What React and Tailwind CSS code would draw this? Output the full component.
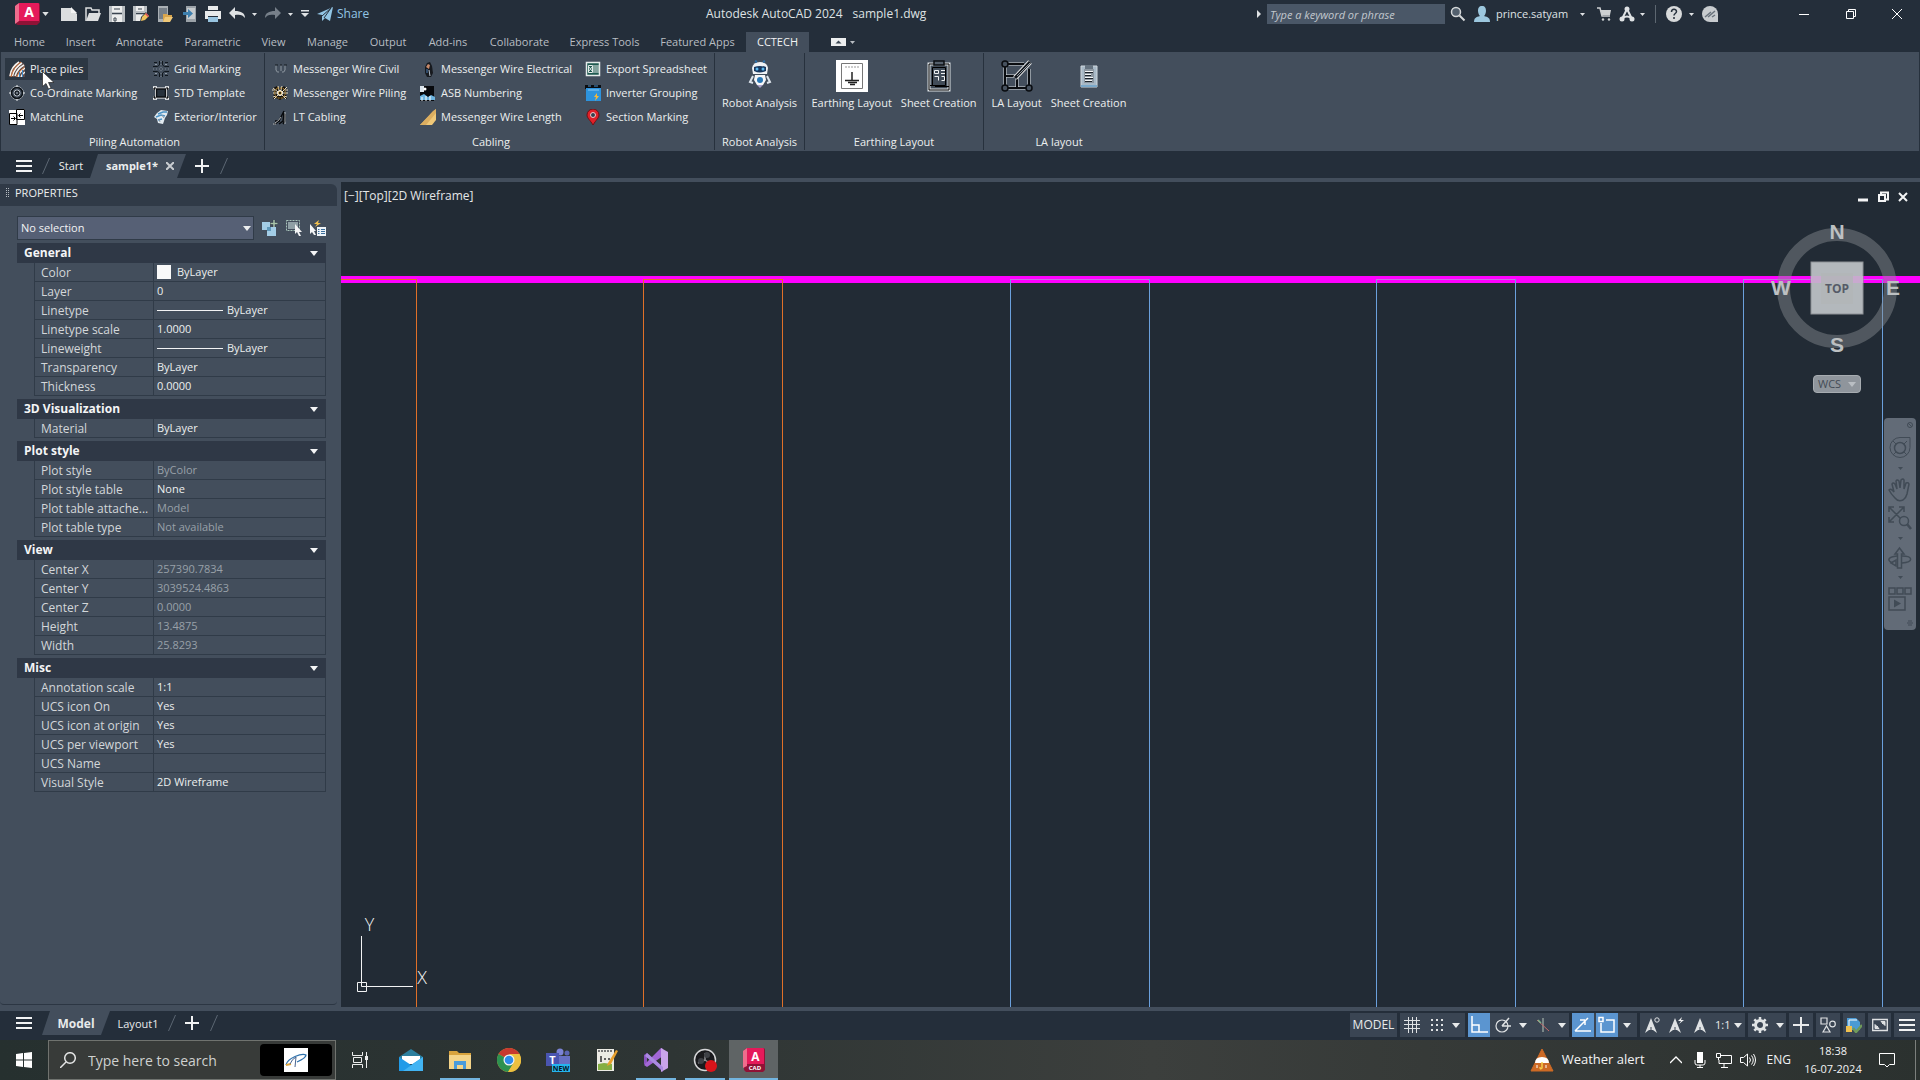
import clsx from 'clsx'

const RIBBON_TABS = [
  ['Home', 'w-[53px]'],
  ['Insert', 'w-[49px]'],
  ['Annotate', 'w-[69px]'],
  ['Parametric', 'w-[77px]'],
  ['View', 'w-[45px]'],
  ['Manage', 'w-[63px]'],
  ['Output', 'w-[58px]'],
  ['Add-ins', 'w-[62px]'],
  ['Collaborate', 'w-[81px]'],
  ['Express Tools', 'w-[89px]'],
  ['Featured Apps', 'w-[97px]'],
  ['CCTECH', 'w-[63px]'],
]

const SECTIONS = [
  {
    title: 'General',
    rows: [
      ['Color', 'ByLayer', 'swatch'],
      ['Layer', '0'],
      ['Linetype', 'ByLayer', 'line'],
      ['Linetype scale', '1.0000'],
      ['Lineweight', 'ByLayer', 'line'],
      ['Transparency', 'ByLayer'],
      ['Thickness', '0.0000'],
    ],
  },
  { title: '3D Visualization', rows: [['Material', 'ByLayer']] },
  {
    title: 'Plot style',
    rows: [
      ['Plot style', 'ByColor', 'dim'],
      ['Plot style table', 'None'],
      ['Plot table attache...', 'Model', 'dim'],
      ['Plot table type', 'Not available', 'dim'],
    ],
  },
  {
    title: 'View',
    rows: [
      ['Center X', '257390.7834', 'dim'],
      ['Center Y', '3039524.4863', 'dim'],
      ['Center Z', '0.0000', 'dim'],
      ['Height', '13.4875', 'dim'],
      ['Width', '25.8293', 'dim'],
    ],
  },
  {
    title: 'Misc',
    rows: [
      ['Annotation scale', '1:1'],
      ['UCS icon On', 'Yes'],
      ['UCS icon at origin', 'Yes'],
      ['UCS per viewport', 'Yes'],
      ['UCS Name', ''],
      ['Visual Style', '2D Wireframe'],
    ],
  },
]

function Svg({ size = 16, box, className, children }) {
  return (
    <svg
      width={size}
      height={size}
      viewBox={box || `0 0 ${size} ${size}`}
      fill="none"
      aria-hidden="true"
      className={clsx('shrink-0', className)}
    >
      {children}
    </svg>
  )
}

function Caret({ className }) {
  return (
    <svg width="8" height="5" viewBox="0 0 8 5" aria-hidden="true" className={clsx('shrink-0', className)}>
      <path d="M0 0h8L4 5z" fill="currentColor" />
    </svg>
  )
}

function SmallCaret({ className }) {
  return (
    <svg width="5" height="3" viewBox="0 0 5 3" aria-hidden="true" className={clsx('shrink-0', className)}>
      <path d="M0 0h5L2.5 3z" fill="currentColor" />
    </svg>
  )
}

/* ---------- title bar ---------- */

function TitleBar() {
  return (
    <header className="flex h-8 items-center pb-2 text-[#dfe2e4]">
      <div className="flex w-[706px] items-center pt-1">
        <button type="button" aria-label="Application menu" className="ml-[15px] flex items-center gap-[2px]">
          <svg width="25" height="22" viewBox="0 0 25 22" aria-hidden="true">
            <path d="M1 2l4-2h18a2 2 0 0 1 2 2v17l-3 3H3a2 2 0 0 1-2-2z" fill="#8f1236" />
            <path d="M4 0h19a1 1 0 0 1 1 1v17H4z" fill="#e51a5a" />
            <path d="M0 3l4-3v18l-4 3z" fill="#ee6d8d" />
            <text x="14" y="14" textAnchor="middle" fontSize="14" fontWeight="700" fill="#fff">A</text>
          </svg>
          <Caret className="h-1 w-[7px]" />
        </button>
        <button type="button" aria-label="New" className="ml-3">
          <Svg><path d="M0 2h10l6 6v7H0z" fill="#dcdedf" /><path d="M10 1l6 6h-6z" fill="#f4f4f4" /></Svg>
        </button>
        <button type="button" aria-label="Open" className="ml-2">
          <Svg><path d="M1 15V2h5l1 2h7v3" stroke="#dcdedf" strokeWidth="1.5" /><path d="M4 7h12l-3 8H1z" fill="#dcdedf" /></Svg>
        </button>
        <button type="button" aria-label="Save" className="ml-2">
          <Svg>
            <path d="M0 0h16v16H0z" fill="#b9bec2" />
            <path d="M3 0h10v6H3zM3 9h10v7H3z" fill="#eceded" />
            <path d="M5 3h6M3 7.500h10M5 12h2v3H5z" stroke="#3a444f" />
          </Svg>
        </button>
        <button type="button" aria-label="Save As" className="ml-2">
          <Svg>
            <path d="M0 0h14v8l-6 7H0z" fill="#b9bec2" />
            <path d="M3 0h8v5H3zM3 9h7v6H3z" fill="#eceded" />
            <path d="M3 7.500h9M5 3h4" stroke="#3a444f" />
            <path d="M7 16l1-5 5-5 3 4-5 5z" fill="#27313d" />
            <path d="M8 15l1-4 4-4 3 3-4 4z" fill="#f0c25c" />
            <path d="M13 7l3 3-1 1-3-3z" fill="#d8435a" />
          </Svg>
        </button>
        <button type="button" aria-label="Open from Web and Mobile" className="ml-2">
          <Svg>
            <path d="M1 0h10v16H1z" fill="#a9afb4" /><path d="M2 2h8v11H2z" fill="#767f88" />
            <path d="M6 15V8h4l1 1h4v2" fill="#d9a54c" /><path d="M8 11h8l-3 5H6z" fill="#f0c877" />
          </Svg>
        </button>
        <button type="button" aria-label="Save to Web and Mobile" className="ml-[10px]">
          <Svg>
            <path d="M3 0h10v16H3z" fill="#9ba2a8" /><path d="M4 2h8v11H4z" fill="#c5cacd" />
            <path d="M0 6h5V3l5 4.500-5 4.500V9H0z" fill="#3d7fae" />
          </Svg>
        </button>
        <button type="button" aria-label="Plot" className="ml-1.5">
          <Svg><path d="M3 0h10v4H3zM0 5h16v8h-3v-3H3v3H0z" fill="#e8eaeb" /><path d="M3 11h10v5H3z" fill="#98c4e0" /></Svg>
        </button>
        <button type="button" aria-label="Undo" className="ml-2">
          <Svg><path d="M0 7l6-6v4c6 0 10 2 10 7-2-3-5-4-10-3v4z" fill="#dfe2e4" /></Svg>
        </button>
        <SmallCaret className="ml-[7px]" />
        <button type="button" aria-label="Redo" className="ml-2 text-[#77808a]">
          <Svg><path d="M16 7l-6-6v4C4 5 0 7 0 12c2-3 5-4 10-3v4z" fill="currentColor" /></Svg>
        </button>
        <SmallCaret className="ml-[7px]" />
        <button type="button" aria-label="Customize Quick Access Toolbar" className="ml-2">
          <svg width="8" height="8" viewBox="0 0 8 8" aria-hidden="true"><path d="M0 0h8v1.500H0zM0 3h8L4 7z" fill="currentColor" /></svg>
        </button>
        <button type="button" className="ml-2 flex items-center gap-1 text-[12px] text-[#92c5e4]">
          <Svg><path d="M0 8L16 1l-3 14-5-3-3 3V9z" fill="#92c5e4" /><path d="M5 10l9-8-7 10" stroke="#27313d" /></Svg>
          Share
        </button>
      </div>
      <div className="flex gap-2.5 pt-1 text-[12px]">
        <span>Autodesk AutoCAD 2024</span>
        <span>sample1.dwg</span>
      </div>
      <div className="ml-auto flex items-center pt-1">
        <svg width="4" height="8" viewBox="0 0 4 8" aria-hidden="true"><path d="M0 0l4 4-4 4z" fill="currentColor" /></svg>
        <input
          type="text"
          aria-label="Search"
          placeholder="Type a keyword or phrase"
          className="ml-1.5 h-5 w-[178px] bg-[#4a5767] px-[3px] text-[11px] italic placeholder:text-[#c2c8ce]"
        />
        <button type="button" aria-label="Find" className="ml-[5px]">
          <Svg><circle cx="6" cy="6" r="4.500" fill="#53606e" stroke="#d5d8da" strokeWidth="1.500" /><path d="M9.500 9.500l5 5" stroke="#d5d8da" strokeWidth="2" /></Svg>
        </button>
        <button type="button" className="ml-2 flex items-center gap-1.5 text-[11px]">
          <Svg><path d="M8 0c3 0 4 2 4 5s-2 5-2 5c4 1 6 2 6 6H0c0-4 2-5 6-6 0 0-2-2-2-5s1-5 4-5z" fill="#9cc7de" /></Svg>
          <span className="w-[74px] text-left">prince.satyam</span>
        </button>
        <SmallCaret className="ml-2.5" />
        <button type="button" aria-label="App Store" className="ml-3">
          <Svg size={14}><path d="M0 1h3l2 8h8" stroke="#cdd0d2" strokeWidth="1.500" /><path d="M3.500 3H14l-1 5H5z" fill="#cdd0d2" /><circle cx="6" cy="12.500" r="1.200" fill="#cdd0d2" /><circle cx="12" cy="12.500" r="1.200" fill="#cdd0d2" /></Svg>
        </button>
        <button type="button" aria-label="Autodesk App" className="ml-2">
          <Svg><path d="M8 3L3.500 12M8 3l4.500 9M4 12q4-3 8 0" stroke="#dfe2e4" strokeWidth="2" /><circle cx="8" cy="3" r="2.500" fill="#dfe2e4" /><circle cx="3" cy="13" r="2.500" fill="#dfe2e4" /><circle cx="13" cy="13" r="2.500" fill="#dfe2e4" /></Svg>
        </button>
        <SmallCaret className="ml-[5px]" />
        <span className="ml-2.5 h-[18px] w-px bg-[#5d6771]" />
        <button type="button" aria-label="Help" className="ml-2.5">
          <Svg><circle cx="8" cy="8" r="8" fill="#d8dadb" /><path d="M5.500 6c0-3.500 5-3.500 5-.5 0 2-2.500 2-2.500 4M8 11v2" stroke="#27313d" strokeWidth="1.500" /></Svg>
        </button>
        <SmallCaret className="ml-[7px]" />
        <button type="button" aria-label="Autodesk" className="ml-2">
          <Svg><path d="M8 0a8 8 0 0 1 8 8v8H8A8 8 0 0 1 8 0z" fill="#c8cccf" /><path d="M3 11l6-5M6 11l7-6M10 11l3-2" stroke="#69737d" strokeWidth="1.500" /></Svg>
        </button>
        <button type="button" aria-label="Minimize" className="ml-[80px] text-white">
          <Svg size={12}><path d="M1 6.500h10" stroke="currentColor" /></Svg>
        </button>
        <button type="button" aria-label="Restore" className="ml-[35px] text-white">
          <Svg size={12}><path d="M1.500 3.500h7v7h-7zM3.500 3V1.500h7v7H9" stroke="currentColor" /></Svg>
        </button>
        <button type="button" aria-label="Close" className="mr-[17px] ml-[34px] text-white">
          <Svg size={12}><path d="M1 1l10 10M11 1L1 11" stroke="currentColor" /></Svg>
        </button>
      </div>
    </header>
  )
}

function RibbonTabs() {
  return (
    <nav className="flex h-5 items-stretch pl-[3px] text-[11px] text-[#b8bdc2]">
      {RIBBON_TABS.map(([label, width]) => (
        <button
          type="button"
          key={label}
          className={clsx(
            'text-center leading-5 whitespace-nowrap',
            width,
            label === 'CCTECH' && 'bg-[#434e5c] text-[#f2f3f4]',
          )}
        >
          {label}
        </button>
      ))}
      <button type="button" aria-label="Minimize ribbon" className="ml-[22px] flex items-center gap-1">
        <svg width="15" height="8" viewBox="0 0 15 8" aria-hidden="true">
          <path d="M0 0h15v8H0z" fill="#eceeef" />
          <path d="M4.500 5.500h6l-3-3z" fill="#3b4653" />
        </svg>
        <SmallCaret />
      </button>
    </nav>
  )
}

/* ---------- ribbon icons ---------- */

const I = {
  piles: (
    <Svg>
      <path d="M0 15Q2 4 10 1h3l3 3v12H0z" fill="#5a4a48" />
      <path d="M1 15Q2 6 10 1M3.500 15Q5 7 13 2M6 15q2-7 9-11M9 16q1-5 7-9M12 16q1-3 4-5" stroke="#f6f3ef" strokeWidth="1.500" />
      <path d="M2 16Q4 6 12 1M7.500 16q2-6 8-10" stroke="#d9773c" />
      <path d="M13.500 9v7M10.500 11v5" stroke="#3e8ac8" />
    </Svg>
  ),
  coord: (
    <Svg>
      <circle cx="8" cy="8" r="6.500" stroke="#aab2ba" strokeWidth="1" />
      <circle cx="8" cy="8" r="5.500" stroke="#0d1217" strokeWidth="1.500" />
      <circle cx="8" cy="8" r="3" stroke="#b9c0c6" strokeWidth="1" />
      <circle cx="8" cy="8" r="2" stroke="#0d1217" strokeWidth="1" />
      <path d="M8 0v2M8 14v2M0 8h2M14 8h2M7.500 8h1" stroke="#eef0f1" />
    </Svg>
  ),
  match: (
    <Svg>
      <path d="M0 1h8v14H0zM8 0h8v16H8z" fill="#fff" />
      <path d="M.5 4.500H8v11H.5zM7.500.5h8v10h-8z" fill="#fff" stroke="#000" />
      <path d="M2 9.500h4M4.500 7.500l2 2-2 2M14 6.500h-4M11.500 4.500l-2 2 2 2" stroke="#000" />
    </Svg>
  ),
  grid: (
    <Svg>
      <g stroke="#10161c">
        <path d="M0 5.500h4.500L6.500 4V0M9.500 0v4l2 1.500H16M0 10.500h4.500l2 1.500v4M9.500 16v-4l2-1.500H16" />
        <path d="M1 1.500h3M12 1.500h3M1 14.500h3M12 14.500h3" />
      </g>
      <path d="M8 0v16M0 8h16" stroke="#7e8892" strokeDasharray="1 2" />
      <path d="M2 3.500h2M12 3.500h2M2 12.500h2M12 12.500h2" stroke="#8f98a1" />
    </Svg>
  ),
  std: (
    <Svg>
      <path d="M3.500 4h9v8h-9z" stroke="#fff" strokeWidth="3" />
      <path d="M3.500 4h9v8h-9z" fill="#27313c" stroke="#0b0e12" strokeWidth="1.500" />
      <path d="M0 5V2h4M12 2h4v3M0 11v3h4M12 14h4v-3" stroke="#fff" strokeWidth="1.500" />
      <path d="M1 5V3h2M13 3h2v2M1 11v2h2M13 13h2v-2" stroke="#000" />
    </Svg>
  ),
  exterior: (
    <Svg>
      <path d="M1 8l3-4 4-3 7 1-1 4-2 3-2 6-5-1-1-4z" fill="#e3ebf1" />
      <path d="M5 5l5-2 4 0M3 8l5-2 4 1M5 11l4-1" stroke="#4b93c6" strokeWidth="1.500" />
      <path d="M9 6l2 3M6 10l1 3" stroke="#8c97a1" />
    </Svg>
  ),
  civil: (
    <Svg><path d="M4 4v5q1 3 3 2M9 4v6M13 4v5q-1 3-3 2" stroke="#8f98a1" /><path d="M3 4h3M8 4h2M12 4h3" stroke="#141a20" /></Svg>
  ),
  piling: (
    <Svg>
      <path d="M1 3l4-2 3 3 4-3 3 3-1 5 1 5-4-1-3 2-4-2-3 1 1-6z" fill="#15120d" />
      <path d="M1 3l5 4M15 2l-5 5M2 14l4-4M14 14l-4-4M1 8h4M11 8h5M6 1l1 4M10 1L9 5M1 12l3-1M15 12l-3-1M0 5h3M13 5h3" stroke="#e9dcc0" />
      <path d="M5 3l6 0 3 5-3 5H5L2 8z" stroke="#b98a34" strokeDasharray="2 1" />
      <circle cx="8" cy="8" r="2.500" fill="#d8b05a" stroke="#fff" />
      <circle cx="8" cy="8" r="1" fill="#000" />
    </Svg>
  ),
  lt: (
    <Svg>
      <path d="M2 15q4-1 6-5l4-8M7 15l4-3 1-8M11 15l2-3V5M3 12h5" stroke="#07090c" strokeWidth="1.500" />
      <path d="M3 14q4-2 6-6M13 3v12M1 15h3" stroke="#e7e9ea" strokeWidth=".7" />
    </Svg>
  ),
  electrical: (
    <Svg><path d="M5 6l2-4 3-1 2 4 1 7-2 4H7l-2-4z" fill="#171a1f" /><path d="M6 6l2-3 2 1-1 4z" fill="#c88a6c" /><path d="M9 9l1 6" stroke="#b9c4d0" /><path d="M7 8v4" stroke="#385b85" strokeWidth="1.500" /></Svg>
  ),
  asb: (
    <Svg>
      <path d="M0 1h14v15H0z" fill="#07090d" />
      <path d="M0 1h4v6H0z" fill="#dce5ed" /><circle cx="5" cy="4" r="1.500" fill="#fff" />
      <path d="M0 11l4-2 4 3 3-2 4 2v3H0z" fill="#6cb3df" /><path d="M2 12v4M6 11v5M10 11v5" stroke="#fff" />
    </Svg>
  ),
  length: (
    <Svg><path d="M0 16h12l4-5V0z" fill="#f0c878" /><path d="M0 16L13 2l3-2v4L6 16z" fill="#dcae60" /></Svg>
  ),
  sheet: (
    <Svg>
      <path d="M1.500 1.500h13v13h-13z" fill="#1f5a50" stroke="#e5ebea" strokeWidth="1.500" />
      <path d="M3.500 4.500h4v7h-4zM9 4v8M11 4v8M13 4v8" stroke="#e5ebea" />
      <path d="M4 6l3 4M7 6l-3 4" stroke="#fff" strokeWidth=".8" />
    </Svg>
  ),
  inverter: (
    <Svg>
      <path d="M0 0h16v4H0z" fill="#0a0c10" /><path d="M3 1h3M9 1h4" stroke="#4a90c8" />
      <path d="M1 3h15v13H1z" fill="#2d93dd" /><path d="M3 5h11" stroke="#8cc8f2" />
      <path d="M12 8l-3 4h2l-1 4 4-5h-2z" fill="#f6b838" />
    </Svg>
  ),
  pin: (
    <Svg><path d="M8 16C5 11 2 9 2 6a6 6 0 0 1 12 0c0 3-3 5-6 10z" fill="#e02028" stroke="#6d1016" /><circle cx="8" cy="6" r="2.500" fill="#34414f" stroke="#f5c6c8" /></Svg>
  ),
  robot: (
    <Svg size={32}>
      <path d="M8 8q1-6 8-6t8 6l-1 6H9z" fill="#eef1f5" />
      <path d="M10 7q6-2 12 0v4q-6 3-12 0z" fill="#17375e" /><circle cx="13" cy="9" r="1.500" fill="#5ab8ee" /><circle cx="19" cy="9" r="1.500" fill="#5ab8ee" />
      <path d="M13 2l-2-1M19 2l2-1" stroke="#2d6fa8" strokeWidth="2" />
      <path d="M11 15h10l1 5-3 5h-6l-3-5z" fill="#f6f7f9" /><path d="M9 16l-3 6 3 1M23 16l3 6-3 1" stroke="#dde4ec" strokeWidth="2" />
      <circle cx="16" cy="20" r="3" fill="#2a77b5" /><path d="M13 25h6l-3 3z" fill="#a9a2c8" />
    </Svg>
  ),
  earthing: (
    <Svg size={32}>
      <path d="M0 0h32v32H0z" fill="#fff" />
      <path d="M5.500 3.500h21v25h-21z" stroke="#777" />
      <path d="M9 7h14" stroke="#999" strokeDasharray="2 1" />
      <path d="M16 12v8" stroke="#222" strokeWidth="1.500" /><path d="M9 20.500h14M12 22.500h9M14 24.500h5" stroke="#222" strokeWidth="1.500" />
    </Svg>
  ),
  clipboard: (
    <Svg size={32}>
      <path d="M6 4h20v26H6z" fill="#414c58" stroke="#dfe3e6" strokeWidth="3" /><path d="M6 4h20v26H6z" stroke="#000" />
      <path d="M9.500 7.500h13v18h-13z" stroke="#000" />
      <path d="M11 1h10v4H11z" fill="#55606c" stroke="#0b0e12" strokeWidth="1.500" />
      <path d="M11.500 10.500h4v3h-4zM11.500 16.500h4v4M18 10.500h4M18 13.500h4M18.500 16.500h3v4h-3" stroke="#eef0f1" />
      <path d="M7 25.500h4M12 26.500h14" stroke="#000" />
    </Svg>
  ),
  la: (
    <Svg size={32}>
      <path d="M4 4v24h24V9M4 4h19M4 16h10M16 18v10" stroke="#dfe3e6" strokeWidth="3" />
      <path d="M4 4v24h24V9M4 4h19M4 16h10M16 18v10" stroke="#0a0d11" strokeWidth="2" />
      <path d="M14 18L29 2" stroke="#e9ebec" strokeWidth="5" /><path d="M14 18L29 2" stroke="#12171d" strokeWidth="3" /><path d="M16 16L29 3" stroke="#8e979f" />
      <g fill="#47525f" stroke="#0a0d11" strokeWidth="1.500"><circle cx="4" cy="4" r="3" /><circle cx="4" cy="28" r="3" /><circle cx="28" cy="28" r="3" /></g>
    </Svg>
  ),
  sheetSmall: (
    <Svg size={32}>
      <path d="M8 6h16v21H8z" fill="#a8b9c7" /><path d="M8 6h16v21H8z" stroke="#d0d8de" /><path d="M8 25h16v2H8z" fill="#7ba9cb" />
      <path d="M11 9h10v14H11z" fill="#8b96a0" /><path d="M12 5h8v4h-8z" fill="#65727f" />
      <path d="M12 11.500h8M12 14.500h6M12 17.500h8M12 20.500h7" stroke="#f4f6f7" /><path d="M12 12.500h8M12 15.500h6M12 18.500h8M12 21.500h7" stroke="#1c232b" />
    </Svg>
  ),
}

function SmallButton({ icon, children, active }) {
  return (
    <button
      type="button"
      className={clsx(
        'flex h-[22px] items-center gap-[5px] px-1 text-[11px] whitespace-nowrap text-[#eceeef]',
        active && 'bg-[#2c3743]',
      )}
    >
      {icon}
      {children}
    </button>
  )
}

function LargeButton({ icon, children }) {
  return (
    <button type="button" className="flex flex-col items-center gap-[3px] text-[11px] whitespace-nowrap text-[#eceeef]">
      {icon}
      {children}
    </button>
  )
}

function RibbonPanel({ title, className, children }) {
  return (
    <section className={clsx('flex h-[97px] flex-col justify-between border-r border-[#27313d]', className)}>
      <div className="flex pt-[5px]">{children}</div>
      <h2 className="text-center text-[11px] leading-4 text-[#eceeef]">{title}</h2>
    </section>
  )
}

function Column({ className, children }) {
  return <div className={clsx('flex flex-col items-start gap-0.5', className)}>{children}</div>
}

function Ribbon() {
  return (
    <div className="flex h-[99px] border-x border-[#27313d] bg-[#434e5c] pt-px">
      <RibbonPanel title="Piling Automation" className="w-[264px] pl-1">
        <Column className="w-[144px]">
          <SmallButton icon={I.piles} active>Place piles</SmallButton>
          <SmallButton icon={I.coord}>Co-Ordinate Marking</SmallButton>
          <SmallButton icon={I.match}>MatchLine</SmallButton>
        </Column>
        <Column>
          <SmallButton icon={I.grid}>Grid Marking</SmallButton>
          <SmallButton icon={I.std}>STD Template</SmallButton>
          <SmallButton icon={I.exterior}>Exterior/Interior</SmallButton>
        </Column>
      </RibbonPanel>
      <RibbonPanel title="Cabling" className="w-[450px] pl-[3px]">
        <Column className="w-[148px]">
          <SmallButton icon={I.civil}>Messenger Wire Civil</SmallButton>
          <SmallButton icon={I.piling}>Messenger Wire Piling</SmallButton>
          <SmallButton icon={I.lt}>LT Cabling</SmallButton>
        </Column>
        <Column className="w-[165px]">
          <SmallButton icon={I.electrical}>Messenger Wire Electrical</SmallButton>
          <SmallButton icon={I.asb}>ASB Numbering</SmallButton>
          <SmallButton icon={I.length}>Messenger Wire Length</SmallButton>
        </Column>
        <Column>
          <SmallButton icon={I.sheet}>Export Spreadsheet</SmallButton>
          <SmallButton icon={I.inverter}>Inverter Grouping</SmallButton>
          <SmallButton icon={I.pin}>Section Marking</SmallButton>
        </Column>
      </RibbonPanel>
      <RibbonPanel title="Robot Analysis" className="w-[90px]">
        <div className="flex w-full justify-center pt-0.5">
          <LargeButton icon={I.robot}>Robot Analysis</LargeButton>
        </div>
      </RibbonPanel>
      <RibbonPanel title="Earthing Layout" className="w-[179px]">
        <div className="flex w-full justify-center gap-[9px] pt-0.5">
          <LargeButton icon={I.earthing}>Earthing Layout</LargeButton>
          <LargeButton icon={I.clipboard}>Sheet Creation</LargeButton>
        </div>
      </RibbonPanel>
      <RibbonPanel title="LA layout" className="w-[150px] border-r-0">
        <div className="flex w-full justify-center gap-[9px] pt-0.5">
          <LargeButton icon={I.la}>LA Layout</LargeButton>
          <LargeButton icon={I.sheetSmall}>Sheet Creation</LargeButton>
        </div>
      </RibbonPanel>
    </div>
  )
}

/* ---------- document and layout tabs ---------- */

function Burger() {
  return <Svg><path d="M0 3h16M0 8h16M0 13h16" stroke="#f2f3f4" strokeWidth="2" /></Svg>
}

function Slash({ className }) {
  return (
    <svg width="8" height="16" viewBox="0 0 8 16" aria-hidden="true" className={clsx('shrink-0', className)}>
      <path d="M7.500 0L.5 16" stroke="#5c6773" />
    </svg>
  )
}

function Plus() {
  return <Svg size={14}><path d="M7 0v14M0 7h14" stroke="#f2f3f4" strokeWidth="2" /></Svg>
}

function FileTabs() {
  return (
    <nav className="flex h-[27px] items-center pt-[3px] text-[11px] text-[#eceeef]">
      <button type="button" aria-label="Document list" className="ml-4"><Burger /></button>
      <Slash className="ml-2.5" />
      <button type="button" className="ml-[7px] w-7">Start</button>
      <div className="ml-[5px] flex h-6 w-[96px] items-center gap-2 bg-[#434e5c] pl-4 [clip-path:polygon(8px_0,100%_0,calc(100%-9px)_100%,0_100%)]">
        <button type="button" className="w-[52px] text-left font-bold">sample1*</button>
        <button type="button" aria-label="Close sample1">
          <Svg size={8}><path d="M0 0l8 8M8 0L0 8" stroke="#c9cdd1" strokeWidth="2" /></Svg>
        </button>
      </div>
      <button type="button" aria-label="New drawing" className="ml-[9px]"><Plus /></button>
      <Slash className="ml-[11px]" />
    </nav>
  )
}

/* ---------- properties palette ---------- */

function PropertyValue({ value, kind }) {
  return (
    <span className={clsx('flex items-center', kind === 'dim' ? 'text-[#98a0a8]' : 'text-[#eceeef]')}>
      {kind === 'swatch' && <span className="mr-1.5 h-[14px] w-[14px] bg-[#f9f9f9]" />}
      {kind === 'line' && <span className="mr-1 h-px w-[66px] bg-[#f2f3f4]" />}
      {value}
    </span>
  )
}

function PropertySection({ title, rows }) {
  return (
    <section className="mb-[3px]">
      <button type="button" className="flex h-5 w-full items-center justify-between bg-[#2f3846] pr-2 pl-[7px] font-bold text-[#f4f5f6]">
        {title}
        <Caret />
      </button>
      <table className="ml-[17px] w-[292px] table-fixed border-separate border-spacing-0" aria-label={title}>
        <tbody>
          {rows.map(([label, value, kind]) => (
            <tr key={label}>
              <th scope="row" className="h-[19px] w-[120px] border-x border-b border-[#303b48] pt-0.5 pb-0 pl-1.5 text-left leading-4 font-normal whitespace-nowrap text-[#d3d7da]">
                {label}
              </th>
              <td className="h-[19px] border-r border-b border-[#303b48] py-0 pl-[3px] text-[11px] leading-[18px]">
                <PropertyValue value={value} kind={kind} />
              </td>
            </tr>
          ))}
        </tbody>
      </table>
    </section>
  )
}

function PropertiesPalette() {
  return (
    <aside className="flex w-[341px] shrink-0 flex-col bg-[#434e5c] pr-1 text-[12px]">
      <div className="mt-1.5 flex h-[22px] items-center gap-1.5 rounded-tr-md bg-[#303a47] pb-1 pl-1.5 text-[11px] text-[#eceeef]">
        <svg width="3" height="10" viewBox="0 0 3 10" aria-hidden="true">
          <path d="M.5 0v10M2.500 0v10" stroke="#b5bbc1" strokeDasharray="1 1" />
        </svg>
        <h2>PROPERTIES</h2>
      </div>
      <div className="flex-1 rounded-b border-b border-[#2c3643] pr-[11px] pl-[17px]">
        <div className="mt-2.5 mb-[3px] flex h-6 items-center">
          <div className="relative h-6 w-[237px]">
            <select aria-label="Selection" className="h-full w-full appearance-none border border-[#303b48] bg-[#566075] px-[3px] text-[11px] text-[#f2f3f4]">
              <option>No selection</option>
            </select>
            <Caret className="pointer-events-none absolute top-[10px] right-[3px] text-[#eceeef]" />
          </div>
          <button type="button" aria-label="Toggle PICKADD" className="ml-2">
            <Svg><path d="M0 2h8v8H0zM5 7h9v9H5z" fill="#a3cde6" /><path d="M5 7h4v4H5z" fill="#5f99bb" /><path d="M12 0v7M8.500 3.500h7" stroke="#303b48" strokeWidth="3" /><path d="M12 0v7M8.500 3.500h7" stroke="#a9c4a9" strokeWidth="1.500" /></Svg>
          </button>
          <button type="button" aria-label="Select Objects" className="ml-2">
            <Svg><path d="M.5.500h13v10H.5z" stroke="#a9c4bb" strokeDasharray="2 1" /><path d="M2 2h10v7H2z" fill="#8fa0a5" /><path d="M9 4l7 8h-3l2 4h-2l-2-4-2 2z" fill="#f4f5f6" /></Svg>
          </button>
          <button type="button" aria-label="Quick Select" className="ml-2">
            <Svg><path d="M0 4l6 7H4l2 4H4l-2-3-2 2z" fill="#f4f5f6" /><path d="M9 0L4 4h3L5 7l6-4H8z" fill="#f2c14f" /><path d="M7 7h9v9H7z" fill="#eef3f7" /><path d="M8 9.500h1.500M8 11.500h1.500M8 13.500h1.500M11 9.500h4M11 11.500h4M11 13.500h4" stroke="#3d6f9c" /></Svg>
          </button>
        </div>
        {SECTIONS.map((s) => <PropertySection key={s.title} {...s} />)}
      </div>
      <div className="h-[2px]" />
    </aside>
  )
}

/* ---------- drawing area ---------- */

const ORANGE_LINES = [75, 302, 441]
const BLUE_LINES = [669, 808, 1035, 1174, 1402, 1541]

function Drawing() {
  return (
    <svg className="absolute inset-0 h-full w-full" aria-hidden="true">
      <rect x="0" y="94" width="100%" height="7" fill="#ff00ff" />
      <g fill="#e07028">
        {ORANGE_LINES.map((x) => <rect key={x} x={x} y="97" width="1" height="100%" />)}
        <rect x="0" y="97" width="75" height="1" />
        <rect x="302" y="97" width="139" height="1" />
      </g>
      <g fill="#6ba0dc">
        {BLUE_LINES.map((x) => <rect key={x} x={x} y="97" width="1" height="100%" />)}
      </g>
      <g fill="#c86fe0">
        <rect x="669" y="97" width="139" height="1" />
        <rect x="1035" y="97" width="139" height="1" />
        <rect x="1402" y="97" width="139" height="1" />
      </g>
    </svg>
  )
}

function UcsIcon() {
  return (
    <svg width="80" height="90" viewBox="0 -10 80 90" className="absolute bottom-[11px] left-[16px]" aria-label="UCS">
      <g stroke="#f2f3f4" fill="none">
        <path d="M4.500 20v50.500H56" />
        <path d="M.5 66.500h9v9h-9z" />
      </g>
      <g fill="#f2f3f4" fontSize="18" fontWeight="300">
        <text x="12.500" y="15" textAnchor="middle">Y</text>
        <text x="65" y="68" textAnchor="middle">X</text>
      </g>
    </svg>
  )
}

function ViewCube() {
  return (
    <div className="absolute top-[38px] right-[8px] flex w-[150px] flex-col items-center">
      <svg width="150" height="136" viewBox="0 0 150 136" role="img" aria-label="View cube">
        <circle cx="75" cy="68" r="53.500" fill="none" stroke="#8a8d92" strokeOpacity=".45" strokeWidth="13" />
        <rect x="49" y="42" width="52" height="52" fill="#bcc0c4" fillOpacity=".95" stroke="#8d9196" />
        <rect x="49" y="56" width="52" height="7" fill="#c9a9cf" />
        <rect x="59" y="53" width="32" height="31" fill="#b2b5b6" fillOpacity=".8" />
        <g fill="#bdc0c2" fontFamily="Liberation Sans, sans-serif" fontWeight="700" fontSize="21" textAnchor="middle">
          <text x="75" y="19">N</text>
          <text x="75" y="132">S</text>
          <text x="19" y="75">W</text>
          <text x="131" y="75">E</text>
        </g>
        <text x="75" y="73" textAnchor="middle" fontSize="12" fontWeight="700" fill="#565b68">TOP</text>
      </svg>
      <button type="button" className="mt-[19px] flex h-[18px] w-12 items-center justify-between rounded border border-[#a7acb1] bg-[#8f959c] px-1 text-[11px] text-[#444c56]">
        WCS
        <Caret className="text-[#b9bec3]" />
      </button>
    </div>
  )
}

function NavBar() {
  return (
    <div className="absolute top-[236px] right-1 flex h-[212px] w-8 flex-col items-center rounded bg-[#626b77] text-[#414b56]">
      <Svg size={6} className="mt-1 mr-[3px] self-end"><circle cx="3" cy="3" r="2.500" stroke="currentColor" /><path d="M1 1l4 4" stroke="currentColor" /></Svg>
      <button type="button" aria-label="Steering wheel" className="mt-2">
        <Svg size={24}><path d="M12 1.500h10v10A10 10 0 1 1 12 1.500z" stroke="currentColor" /><circle cx="12" cy="12" r="5.500" stroke="currentColor" strokeWidth="1.500" /><path d="M5 5l3 3M5 19l3-3M19 19l-3-3M19 5l-3 3" stroke="currentColor" /></Svg>
      </button>
      <SmallCaret className="mt-[7px]" />
      <button type="button" aria-label="Pan" className="mt-2">
        <Svg size={24}><path d="M7 20q-4-4-6-8 2-2 5 2L4 6q1-2 3 0l2 5-1-8q1-2 3 0l1 7 1-8q2-2 3 0l0 9 2-6q2-1 3 1l-2 10q-1 4-4 6-5 2-8-2z" stroke="currentColor" strokeWidth="1.500" /></Svg>
      </button>
      <button type="button" aria-label="Zoom extents" className="mt-1">
        <Svg size={24}><path d="M1 6V1h5M11 1h5v5M1 11v5h5M1 1l15 15M16 1L1 16" stroke="currentColor" strokeWidth="1.500" /><circle cx="16" cy="15" r="4.500" fill="#626b77" stroke="currentColor" strokeWidth="1.500" /><path d="M19 18l4 5" stroke="currentColor" strokeWidth="2.500" /></Svg>
      </button>
      <SmallCaret className="mt-[7px]" />
      <button type="button" aria-label="Orbit" className="mt-1.5">
        <Svg size={24}><path d="M9.500 22V8H7l4.500-6L16 8h-2.500v14z" stroke="currentColor" strokeWidth="1.500" /><path d="M14 17c12-1 11-7 0-7M9 10C-1 11-1 15 5 17M3 17l5-3v6z" stroke="currentColor" strokeWidth="1.500" /></Svg>
      </button>
      <SmallCaret className="mt-1.5" />
      <button type="button" aria-label="ShowMotion" className="mt-2">
        <Svg size={24}><path d="M1 1h6v6H1zM9 1h6v6H9zM17 1h6v6h-6zM1 10h16v13H1z" stroke="currentColor" strokeWidth="1.500" /><path d="M6 12.500l7 4-7 4z" fill="currentColor" /></Svg>
      </button>
      <Svg size={6} className="mt-auto mr-[3px] mb-1 self-end"><path d="M0 3h6M1 1h4M1 5h4" stroke="currentColor" /></Svg>
    </div>
  )
}

function Canvas() {
  return (
    <main className="relative mt-1 flex-1 overflow-hidden bg-[#222b35]">
      <Drawing />
      <div className="relative flex items-center justify-between pt-[5px] pr-[11px] pl-[3px] text-[12px] text-[#e4e6e8]">
        <button type="button">[−][Top][2D Wireframe]</button>
        <div className="flex gap-2 pt-0.5 text-[#f4f5f6]">
          <button type="button" aria-label="Minimize viewport"><Svg size={12}><path d="M1 9h10" stroke="currentColor" strokeWidth="3" /></Svg></button>
          <button type="button" aria-label="Restore viewport"><Svg size={12}><path d="M2 4h6v6H2zM4 3V1.500h7v7H9" stroke="currentColor" strokeWidth="2" /></Svg></button>
          <button type="button" aria-label="Close viewport"><Svg size={12}><path d="M2 2l8 8M10 2l-8 8" stroke="currentColor" strokeWidth="2" /></Svg></button>
        </div>
      </div>
      <ViewCube />
      <NavBar />
      <UcsIcon />
    </main>
  )
}

/* ---------- status bar ---------- */

function StatusGroup({ className, children }) {
  return <div className={clsx('flex h-6 items-center bg-[#3a4553]', className)}>{children}</div>
}

function StatusButton({ label, on, className, children }) {
  return (
    <button
      type="button"
      aria-label={label}
      className={clsx('flex h-6 shrink-0 items-center justify-center', on && 'bg-[#5b95d0]', className)}
    >
      {children}
    </button>
  )
}

function StatusBar() {
  return (
    <footer className="flex h-[29px] items-start text-[12px] text-[#e8eaeb]">
      <button type="button" aria-label="Layout list" className="mt-1 ml-4"><Burger /></button>
      <button type="button" className="ml-2.5 h-6 w-[68px] bg-[#434e5c] pt-0.5 font-bold [clip-path:polygon(8px_0,100%_0,calc(100%-9px)_100%,0_100%)]">
        Model
      </button>
      <button type="button" className="ml-[7px] h-6 w-[42px] pt-0.5 text-[11px]">Layout1</button>
      <Slash className="mt-1 ml-[9px]" />
      <button type="button" aria-label="New layout" className="mt-[5px] ml-[9px]"><Plus /></button>
      <Slash className="mt-1 ml-[11px]" />

      <div className="mt-[2px] ml-auto flex gap-[3px]">
        <StatusGroup>
          <StatusButton label="Model space" className="w-[47px]">MODEL</StatusButton>
        </StatusGroup>
        <StatusGroup className="w-[65px]">
          <StatusButton label="Grid" className="w-6"><Svg><path d="M4.500 0v16M8.500 0v16M12.500 0v16M0 3.500h16M0 7.500h16M0 11.500h16" stroke="#dfe2e4" /></Svg></StatusButton>
          <StatusButton label="Snap" className="w-[26px]">
            <Svg size={14}><path d="M1 2h12M1 7h12M1 12h12" stroke="#dfe2e4" strokeWidth="2" strokeDasharray="2 3" /></Svg>
          </StatusButton>
          <Caret className="ml-0.5" />
        </StatusGroup>
        <StatusGroup className="w-[101px]">
          <StatusButton label="Ortho" on className="w-[22px]"><Svg size={18}><path d="M2 0v16h16M2 9h7v7" stroke="#fff" strokeWidth="1.500" /></Svg></StatusButton>
          <StatusButton label="Polar" className="w-[26px]"><Svg><circle cx="7" cy="9" r="6" stroke="#dfe2e4" strokeWidth="1.200" /><path d="M7 9h9M7 9l7-8" stroke="#dfe2e4" strokeWidth="1.500" /></Svg></StatusButton>
          <Caret className="ml-[3px]" />
          <StatusButton label="Isodraft" className="ml-[7px] w-[18px]"><Svg size={14}><path d="M7 0v14" stroke="#b9c9bd" /><path d="M1 2l12 11" stroke="#c66a6a" /><path d="M2 2l3 3" stroke="#7cb38d" strokeWidth="1.500" /></Svg></StatusButton>
          <Caret className="ml-1.5" />
        </StatusGroup>
        <StatusGroup className="w-[65px] gap-0.5">
          <StatusButton label="Object snap tracking" on className="w-[22px]"><Svg size={18}><path d="M1 15h16M1 15L14 2M11 9v-5M11 4h-5" stroke="#fff" strokeWidth="1.500" /></Svg></StatusButton>
          <StatusButton label="Object snap" on className="w-[22px]"><Svg size={18}><path d="M3 7v9h13V4H8" stroke="#fff" strokeWidth="1.500" /><path d="M1 1.500h4v4H1z" stroke="#fff" strokeWidth="1.500" /></Svg></StatusButton>
          <Caret className="ml-[3px]" />
        </StatusGroup>
        <StatusGroup className="w-[105px]">
          <StatusButton label="Annotation visibility" className="w-6"><Svg><path d="M7 1l6 15-4-3H5l-4 3z" fill="#dfe2e4" /><path d="M7 10v6" stroke="#3a4553" /><circle cx="13" cy="3" r="2.200" fill="#3a4553" stroke="#dfe2e4" /></Svg></StatusButton>
          <StatusButton label="Auto scale" className="w-6"><Svg><path d="M7 1l6 15-4-3H5l-4 3z" fill="#dfe2e4" /><path d="M7 10v6" stroke="#3a4553" /><path d="M14 0l-4 4h3l-2 3 5-4h-3z" fill="#f2f3f4" /></Svg></StatusButton>
          <StatusButton label="Annotation" className="w-6"><Svg><path d="M8 1l6 15-4-3H6l-4 3z" fill="#dfe2e4" /><path d="M8 10v6" stroke="#3a4553" /></Svg></StatusButton>
          <StatusButton label="Annotation scale" className="ml-[3px] gap-1 text-[11px]">1:1<Caret /></StatusButton>
        </StatusGroup>
        <StatusGroup className="w-[38px]">
          <StatusButton label="Workspace" className="w-[24px]">
            <Svg>
              <circle cx="8" cy="8" r="4.500" stroke="#dfe2e4" strokeWidth="3" />
              <path d="M8 0v3M8 13v3M0 8h3M13 8h3M2.300 2.300l2.200 2.200M11.500 11.500l2.200 2.200M2.300 13.700l2.200-2.200M11.500 4.500l2.200-2.200" stroke="#dfe2e4" strokeWidth="2.500" />
            </Svg>
          </StatusButton>
          <Caret className="ml-1" />
        </StatusGroup>
        <StatusGroup><StatusButton label="Annotation monitor" className="w-6"><Svg><path d="M8 0v16M0 8h16" stroke="#e8eaeb" strokeWidth="2" /></Svg></StatusButton></StatusGroup>
        <StatusGroup>
          <StatusButton label="Isolate objects" className="w-6"><Svg><path d="M1 1h6v6H1zM3 15l3.500-6L10 15z" stroke="#dfe2e4" strokeWidth="1.200" /><circle cx="12.500" cy="7" r="2.800" stroke="#dfe2e4" strokeWidth="1.200" /></Svg></StatusButton>
        </StatusGroup>
        <StatusGroup>
          <StatusButton label="Graphics performance" className="w-[22px]"><Svg><path d="M1 1h9l4 4v8H1z" fill="#4b9bd5" /><path d="M3 3h8M3 3v8" stroke="#fff" /><path d="M0 9h6v6H0z" fill="#f0c14f" /><path d="M7 11l3 4 6-7" stroke="#6f9a5b" strokeWidth="2.500" /></Svg></StatusButton>
        </StatusGroup>
        <StatusGroup>
          <StatusButton label="Clean screen" className="w-[23px]"><Svg><path d="M.7 2.500h14.600v11H.7z" stroke="#dfe2e4" strokeWidth="1.300" /><path d="M9 4.500h4v4zM3 7.500v4h4zM10 7l2-2M4 11l2-2" fill="#dfe2e4" stroke="#dfe2e4" /></Svg></StatusButton>
        </StatusGroup>
        <StatusGroup><StatusButton label="Customization" className="w-[26px]"><Burger /></StatusButton></StatusGroup>
      </div>
    </footer>
  )
}

/* ---------- desktop taskbar ---------- */

const APPS = [
  {
    name: 'Mail',
    icon: (
      <Svg size={24}><path d="M0 9l12-8 12 8v3H0z" fill="#2b7f9e" /><path d="M3 8h18v8H3z" fill="#fff" /><path d="M0 9l12 8 12-8v14H0z" fill="#219be8" /><path d="M4 23l20-14v14z" fill="#42b4f3" /></Svg>
    ),
  },
  {
    name: 'File Explorer',
    open: true,
    icon: (
      <Svg size={24}><path d="M1 3h8l2 2h12v16H1z" fill="#d8a33d" /><path d="M1 7h22v14H1z" fill="#f4d489" /><path d="M6 21v-8h12v8h-3v-4H9v4z" fill="#4a9bdb" /></Svg>
    ),
  },
  {
    name: 'Chrome',
    icon: (
      <Svg size={24}>
        <circle cx="12" cy="12" r="12" fill="#dba93a" />
        <path d="M12 12L1.600 6A12 12 0 0 1 22.400 6z" fill="#c8392f" />
        <path d="M12 12L1.600 6A12 12 0 0 0 11 24l6-9z" fill="#2c9150" />
        <path d="M12 6h10.400A12 12 0 0 1 11 24l6-10z" fill="#ecc03f" />
        <circle cx="12" cy="12" r="5.500" fill="#f3f3f3" /><circle cx="12" cy="12" r="4.300" fill="#2d8cea" />
      </Svg>
    ),
  },
  {
    name: 'Teams',
    icon: (
      <Svg size={24}>
        <circle cx="14" cy="4" r="3.500" fill="#7b83d6" /><circle cx="21" cy="5" r="2.500" fill="#5b66b5" /><path d="M11 8h13v8q-2 5-7 5-5-1-6-6z" fill="#6670c4" />
        <path d="M0 5h13v13H0z" fill="#4a55b0" />
        <text x="6.500" y="16" textAnchor="middle" fontSize="11" fontWeight="700" fill="#fff">T</text>
        <path d="M6 16h18v8H6z" fill="#25b4ee" />
        <text x="15" y="23" textAnchor="middle" fontSize="7" fontWeight="700" fill="#04141c">NEW</text>
      </Svg>
    ),
  },
  {
    name: 'Notepad++',
    icon: (
      <Svg size={24}><path d="M2 1h17v22H2z" fill="#ecebe4" /><path d="M3 3h14" stroke="#777" strokeWidth="2" strokeDasharray="2 1" /><path d="M3 16l6-1 8 1v6H3z" fill="#84ae42" /><path d="M6 8v6M9 11h2M13 11h2" stroke="#333" strokeWidth="1.500" /><path d="M13 15l8-13 2 1-7 13-4 2z" fill="#e8a02e" /></Svg>
    ),
  },
  {
    name: 'Visual Studio',
    open: true,
    icon: (
      <Svg size={24}><path d="M0 7l3-2L19 19v5L3 9v8l-3-1z" fill="#8b53c1" /><path d="M3 19l-3-2L17 0l2 1v7z" fill="#a267d6" /><path d="M17 0l7 4v16l-7 4z" fill="#c9a4ea" /><path d="M3 5l16 14v4L1 8z" fill="#a98be0" /></Svg>
    ),
  },
  {
    name: 'OBS',
    open: true,
    icon: (
      <Svg size={24}><circle cx="12" cy="12" r="10.500" fill="#191a1d" stroke="#d5d6d7" strokeWidth="1.500" /><path d="M12 12V5M12 12l-7 3M12 12l6 4" stroke="#8d8f92" strokeWidth="1.500" /><circle cx="14" cy="7" r="3" fill="#3e4146" /><circle cx="8" cy="13" r="3" fill="#3e4146" /><circle cx="18" cy="18" r="6" fill="#d9141a" /></Svg>
    ),
  },
  {
    name: 'AutoCAD',
    open: true,
    active: true,
    icon: (
      <Svg size={24}>
        <path d="M2 2l3-2h16a2 2 0 0 1 2 2v20l-2 2H4l-2-2z" fill="#8f1236" /><path d="M5 0h16a1 1 0 0 1 1 1v15H5z" fill="#e51a5a" /><path d="M1 3l4-3v18l-4 2z" fill="#ee6d8d" />
        <text x="13.500" y="13" textAnchor="middle" fontSize="12" fontWeight="700" fill="#fff">A</text>
        <text x="13" y="22" textAnchor="middle" fontSize="6" fontWeight="700" fill="#fff">CAD</text>
      </Svg>
    ),
  },
]

function Taskbar() {
  return (
    <footer className="flex h-10 items-stretch bg-[linear-gradient(90deg,#26302f,#2e3534_35%,#3c3f3d_60%,#2b312f)] text-[#f2f3f4]">
      <button type="button" aria-label="Start" className="flex w-12 items-center justify-center">
        <Svg><path d="M0 2l7-1v6.500H0zM8 1l8-1v7.500H8zM0 8.500h7V15l-7-1zM8 8.500h8V16l-8-1z" fill="#fff" /></Svg>
      </button>
      <div className="flex w-[288px] items-center border border-[#70736f] bg-[#383b39] pl-[11px]">
        <Svg><circle cx="10" cy="6" r="5.300" stroke="#e4e5e5" strokeWidth="1.500" /><path d="M6 10l-6 6" stroke="#e4e5e5" strokeWidth="1.500" /></Svg>
        <input
          type="text"
          aria-label="Taskbar search"
          placeholder="Type here to search"
          className="ml-3 w-[172px] text-[14px] placeholder:text-[#cfd1d0]"
        />
        <button type="button" aria-label="Search highlights" className="flex h-8 w-[72px] items-center justify-center rounded bg-black">
          <Svg size={24}>
            <path d="M0 0h24v24H0z" fill="#fff" />
            <path d="M2 17Q3 12 11 8.500T22 7q0 3-9 7" stroke="#2f72ad" strokeWidth="1.300" />
            <path d="M2 17l5-1" stroke="#dfa640" strokeWidth="2" /><path d="M6 16Q8 11 12 9l-1 10" stroke="#49648f" />
          </Svg>
        </button>
      </div>
      <button type="button" aria-label="Task View" className="flex w-[48px] items-center justify-center">
        <Svg><path d="M.5 0v3.500h10V0M.5 16v-3.500h10V16M1.500 5.500h8v5h-8zM14.500 0v16" stroke="#eceded" /><path d="M13 4h3v4h-3z" fill="#eceded" /></Svg>
      </button>
      <div className="flex pl-0.5">
        {APPS.map((app) => (
          <button
            type="button"
            key={app.name}
            aria-label={app.name}
            className={clsx('flex w-[49px] flex-col items-center justify-between pt-2', app.active && 'bg-[#5f6465]')}
          >
            {app.icon}
            {app.open && <span className={clsx('h-0.5 bg-[#73b5e0]', app.active ? 'w-full' : 'w-10')} />}
          </button>
        ))}
      </div>
      <div className="ml-auto flex items-center font-normal">
        <button type="button" className="flex items-center gap-2 text-[13px]">
          <Svg size={24}>
            <path d="M12 1l11 22H1z" fill="#cd6a25" stroke="#cd6a25" strokeLinejoin="round" />
            <path d="M5 15q0-6 7-6t7 6z" fill="#fff" /><path d="M12 14v6q-2 2-2-1" stroke="#f6cf4b" strokeWidth="1.500" /><path d="M7 17v3M16 17v3" stroke="#fff" />
          </Svg>
          Weather alert
        </button>
        <button type="button" aria-label="Show hidden icons" className="ml-[25px]"><Svg size={12}><path d="M0 9l6-6 6 6" stroke="#fff" strokeWidth="1.300" /></Svg></button>
        <button type="button" aria-label="Microphone" className="ml-2.5"><Svg><path d="M5 0h6v11H5z" fill="#fff" /><path d="M3 8v3q0 2 2 2h6q2 0 2-2V8M8 13v3M5 15.500h6" stroke="#fff" /></Svg></button>
        <button type="button" aria-label="Network" className="ml-2"><Svg><path d="M5 3.500h10.500v8H3V8M8 12v3M5 15.500h7M.5 1.500h4v4h-4zM2.500 5v3" stroke="#fff" /></Svg></button>
        <button type="button" aria-label="Volume" className="ml-2"><Svg><path d="M.5 5.500h3l4-3.500v12l-4-3.500h-3zM9.500 5.500q2 2.500 0 5M11.500 3.500q3.500 4.500 0 9M13.500 2q4 6 0 12" stroke="#fff" /></Svg></button>
        <button type="button" className="ml-[11px] text-[12px]">ENG</button>
        <button type="button" className="ml-3 flex w-[60px] flex-col items-center text-[11px] leading-[18px] whitespace-nowrap">
          <span>18:38</span>
          <span>16-07-2024</span>
        </button>
        <button type="button" aria-label="Notifications" className="ml-4"><Svg><path d="M.5 1.500h15v11h-5l-2.500 2.500-2.500-2.500h-5z" stroke="#fff" /></Svg></button>
        <span className="mr-1 ml-5 h-10 w-px bg-[#7c7f7d]" />
      </div>
    </footer>
  )
}

function Pointer() {
  return (
    <svg width="13" height="19" viewBox="0 0 13 19" aria-hidden="true" className="pointer-events-none absolute top-[71px] left-[42px]">
      <path d="M.5.500v15l3.500-3 2.500 5.500 2.500-1-2.500-5.500H12z" fill="#fff" stroke="#222" strokeWidth=".7" />
    </svg>
  )
}

export default function App() {
  return (
    <div className="relative flex min-h-screen flex-col overflow-hidden bg-[#242e3a] font-['Open_Sans','Noto_Sans',sans-serif]">
      <TitleBar />
      <RibbonTabs />
      <Ribbon />
      <FileTabs />
      <div className="flex flex-1 bg-[#434e5c] pb-1">
        <PropertiesPalette />
        <Canvas />
      </div>
      <StatusBar />
      <Taskbar />
      <Pointer />
    </div>
  )
}
